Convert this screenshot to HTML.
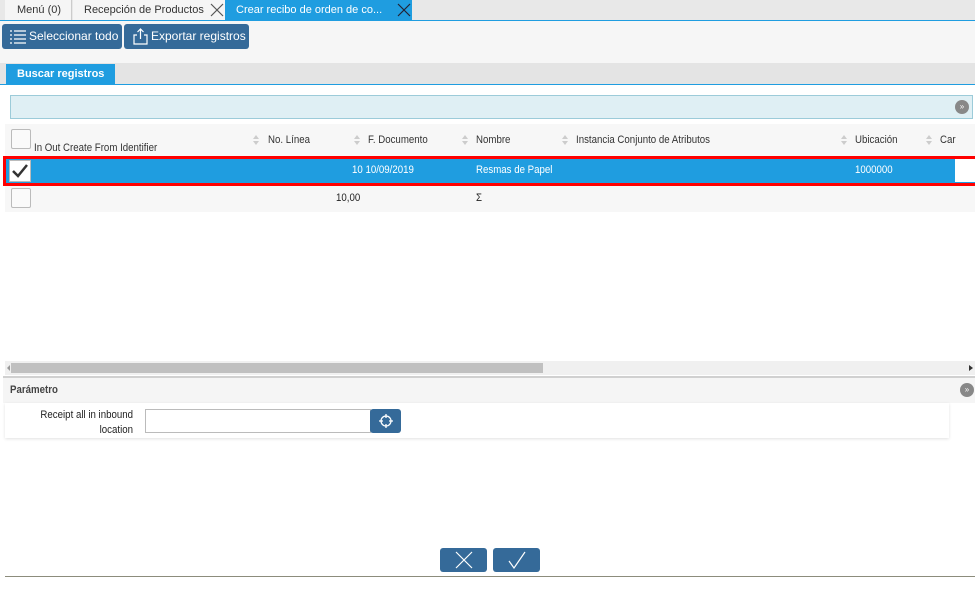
<!DOCTYPE html>
<html><head><meta charset="utf-8"><style>
*{box-sizing:border-box;margin:0;padding:0}
body{width:975px;height:590px;position:relative;background:#fff;font-family:"Liberation Sans",sans-serif;overflow:hidden;color:#333}
.a{position:absolute}
.n{font-family:"Liberation Sans",sans-serif;font-size:11px;transform:scaleX(0.88);transform-origin:0 0;white-space:nowrap}
.btn{background:#356a99;border-radius:3px;color:#fff;font-size:12px}
.sort{position:absolute;width:7px;height:10px}
.sort:before,.sort:after{content:"";position:absolute;left:0;border-left:3.5px solid transparent;border-right:3.5px solid transparent}
.sort:before{top:0;border-bottom:4px solid #ccc}
.sort:after{top:6px;border-top:4px solid #ccc}
.cb{position:absolute;width:20px;height:20px;border:1px solid #bbb;background:#fafafa;border-radius:2px}
</style></head><body>
<div class="a" style="left:0;top:0;width:975px;height:20px;background:#e8e8e8"></div>
<div class="a" style="left:5px;top:0;width:67px;height:20px;background:#f5f5f5;border-right:1px solid #ccc;font-size:11px;padding:4px 0 0 12px">Menú (0)</div>
<div class="a" style="left:73px;top:0;width:152px;height:20px;background:#f5f5f5;font-size:11px;padding:4px 0 0 11px">Recepción de Productos</div>
<svg class="a" style="left:210px;top:3px" width="14" height="14"><path d="M1 1L13 13M13 1L1 13" stroke="#555" stroke-width="1.2"/></svg>
<div class="a" style="left:225px;top:0;width:187px;height:20px;background:#1f9de0;color:#fff;font-size:11px;padding:4px 0 0 11px">Crear recibo de orden de co...</div>
<svg class="a" style="left:397px;top:3px" width="14" height="14"><path d="M1 1L13 13M13 1L1 13" stroke="#223" stroke-width="1.2"/></svg>
<div class="a" style="left:0;top:20px;width:975px;height:1px;background:#1f9de0"></div>
<div class="a" style="left:0;top:21px;width:975px;height:42px;background:#f6f6f6"></div>
<div class="a btn" style="left:2px;top:24px;width:120px;height:25px;padding:5px 0 0 27px">Seleccionar todo</div>
<svg class="a" style="left:9px;top:29px" width="18" height="15"><g stroke="#fff" stroke-width="1.3"><path d="M1 2h2M1 6h2M1 10h2M1 14h2M5 2h12M5 6h12M5 10h12M5 14h12"/></g></svg>
<div class="a btn" style="left:124px;top:24px;width:125px;height:25px;padding:5px 0 0 27px">Exportar registros</div>
<svg class="a" style="left:133px;top:28px" width="15" height="17"><g stroke="#fff" stroke-width="1.2" fill="none"><path d="M4 7H1v9h13V7h-3M7.5 11V1M4.5 4l3-3 3 3"/></g></svg>
<div class="a" style="left:0;top:63px;width:975px;height:21px;background:#e4e4e4"></div>
<div class="a" style="left:6px;top:64px;width:109px;height:21px;background:#1f9de0;color:#fff;font-size:11px;font-weight:bold;padding:4px 0 0 11px">Buscar registros</div>
<div class="a" style="left:0;top:84px;width:975px;height:1px;background:#1f9de0"></div>
<div class="a" style="left:10px;top:95px;width:963px;height:24px;background:#dfeff4;border:1px solid #9ccbd9"></div>
<div class="a" style="left:955px;top:100px;width:14px;height:14px;border-radius:7px;background:#888;color:#fff;font-size:8px;text-align:center;line-height:14px">»</div>
<div class="a" style="left:5px;top:124px;width:970px;height:32px;background:#f7f7f7"></div>
<div class="cb" style="left:11px;top:129px"></div>
<div class="a n" style="left:34px;top:142px">In Out Create From Identifier</div>
<div class="sort" style="left:253px;top:135px"></div><div class="a n" style="left:268px;top:134px">No. Línea</div>
<div class="sort" style="left:354px;top:135px"></div><div class="a n" style="left:368px;top:134px">F. Documento</div>
<div class="sort" style="left:462px;top:135px"></div><div class="a n" style="left:476px;top:134px">Nombre</div>
<div class="sort" style="left:562px;top:135px"></div><div class="a n" style="left:576px;top:134px">Instancia Conjunto de Atributos</div>
<div class="sort" style="left:841px;top:135px"></div><div class="a n" style="left:855px;top:134px">Ubicación</div>
<div class="sort" style="left:926px;top:135px"></div><div class="a n" style="left:940px;top:134px">Car</div>
<div class="a" style="left:3px;top:156px;width:975px;height:30px;background:#1f9de0;border:3px solid #f00"></div>
<div class="a" style="left:9px;top:160px;width:22px;height:22px;background:#fff;border:1px solid #bbb"></div>
<svg class="a" style="left:11px;top:162px" width="18" height="18"><path d="M2 9l5 5L16 3" stroke="#333" stroke-width="2.5" fill="none"/></svg>
<div class="a n" style="left:352px;top:164px;color:#fff">10 10/09/2019</div>
<div class="a n" style="left:476px;top:164px;color:#fff">Resmas de Papel</div>
<div class="a n" style="left:855px;top:164px;color:#fff">1000000</div>
<div class="a" style="left:955px;top:159px;width:20px;height:23px;background:#fff"></div>
<div class="a" style="left:5px;top:186px;width:970px;height:26px;background:#f7f7f7"></div>
<div class="cb" style="left:11px;top:188px"></div>
<div class="a n" style="left:336px;top:192px;color:#222">10,00</div>
<div class="a n" style="left:476px;top:192px;color:#222">Σ</div>
<div class="a" style="left:5px;top:361px;width:970px;height:14px;background:#f0f0f0"></div>
<div class="a" style="left:11px;top:363px;width:532px;height:10px;background:#c0c0c0"></div>
<div class="a" style="left:7px;top:365px;border-right:3px solid #999;border-top:3px solid transparent;border-bottom:3px solid transparent"></div>
<div class="a" style="left:969px;top:365px;border-left:4px solid #333;border-top:3px solid transparent;border-bottom:3px solid transparent"></div>
<div class="a" style="left:3px;top:376px;width:972px;height:2px;background:#d0d0d0"></div>
<div class="a" style="left:3px;top:378px;width:972px;height:25px;background:#f5f5f5"></div>
<div class="a n" style="left:10px;top:384px;font-weight:bold;color:#444">Parámetro</div>
<div class="a" style="left:960px;top:383px;width:14px;height:14px;border-radius:7px;background:#888;color:#fff;font-size:8px;text-align:center;line-height:14px">»</div>
<div class="a" style="left:5px;top:403px;width:944px;height:35px;background:#fff;box-shadow:0 1px 3px rgba(0,0,0,.12)"></div>
<div class="a n" style="left:10px;top:408px;width:123px;text-align:right;line-height:15px;color:#222;transform-origin:100% 0">Receipt all in inbound<br>location</div>
<div class="a" style="left:145px;top:409px;width:226px;height:24px;border:1px solid #bbb;background:#fff"></div>
<div class="a btn" style="left:370px;top:409px;width:31px;height:24px"></div>
<svg class="a" style="left:378px;top:413px" width="16" height="16"><g stroke="#fff" stroke-width="1.3" fill="none"><circle cx="8" cy="8" r="5"/><path d="M8 1v4M8 11v4M1 8h4M11 8h4"/></g></svg>
<div class="a btn" style="left:440px;top:548px;width:47px;height:24px"></div>
<svg class="a" style="left:455px;top:551px" width="18" height="18"><path d="M1 1L17 17M17 1L1 17" stroke="#fff" stroke-width="1.2"/></svg>
<div class="a btn" style="left:493px;top:548px;width:47px;height:24px"></div>
<svg class="a" style="left:508px;top:551px" width="18" height="18"><path d="M1 10l5 7L17 1" stroke="#fff" stroke-width="1.2" fill="none"/></svg>
<div class="a" style="left:5px;top:576px;width:970px;height:1px;background:#8c8c7c"></div>
</body></html>
